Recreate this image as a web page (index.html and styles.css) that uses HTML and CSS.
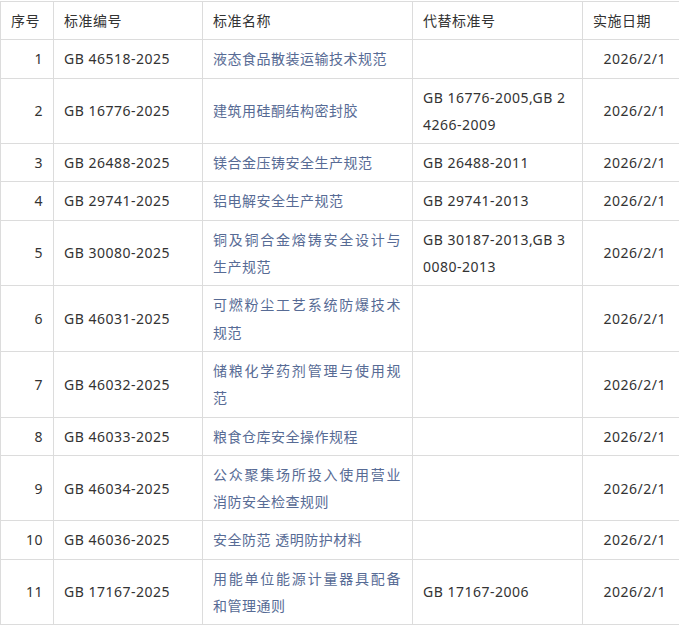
FILE: index.html
```html
<!DOCTYPE html>
<html lang="zh">
<head>
<meta charset="utf-8">
<link rel="stylesheet" href="styles.css">
</head>
<body>
<table class="std-table">
  <colgroup>
    <col class="c-no">
    <col class="c-code">
    <col class="c-name">
    <col class="c-rep">
    <col class="c-date">
  </colgroup>
  <thead>
    <tr><th>序号</th><th>标准编号</th><th>标准名称</th><th>代替标准号</th><th>实施日期</th></tr>
  </thead>
  <tbody>
    <tr><td class="num">1</td><td>GB 46518-2025</td><td class="name">液态食品散装运输技术规范</td><td class="rep"></td><td class="date">2026/2/1</td></tr>
    <tr><td class="num">2</td><td>GB 16776-2025</td><td class="name">建筑用硅酮结构密封胶</td><td class="rep">GB 16776-2005,GB 24266-2009</td><td class="date">2026/2/1</td></tr>
    <tr><td class="num">3</td><td>GB 26488-2025</td><td class="name">镁合金压铸安全生产规范</td><td class="rep">GB 26488-2011</td><td class="date">2026/2/1</td></tr>
    <tr><td class="num">4</td><td>GB 29741-2025</td><td class="name">铝电解安全生产规范</td><td class="rep">GB 29741-2013</td><td class="date">2026/2/1</td></tr>
    <tr><td class="num">5</td><td>GB 30080-2025</td><td class="name">铜及铜合金熔铸安全设计与生产规范</td><td class="rep">GB 30187-2013,GB 30080-2013</td><td class="date">2026/2/1</td></tr>
    <tr><td class="num">6</td><td>GB 46031-2025</td><td class="name">可燃粉尘工艺系统防爆技术规范</td><td class="rep"></td><td class="date">2026/2/1</td></tr>
    <tr><td class="num">7</td><td>GB 46032-2025</td><td class="name">储粮化学药剂管理与使用规范</td><td class="rep"></td><td class="date">2026/2/1</td></tr>
    <tr><td class="num">8</td><td>GB 46033-2025</td><td class="name">粮食仓库安全操作规程</td><td class="rep"></td><td class="date">2026/2/1</td></tr>
    <tr><td class="num">9</td><td>GB 46034-2025</td><td class="name">公众聚集场所投入使用营业消防安全检查规则</td><td class="rep"></td><td class="date">2026/2/1</td></tr>
    <tr><td class="num">10</td><td>GB 46036-2025</td><td class="name">安全防范 透明防护材料</td><td class="rep"></td><td class="date">2026/2/1</td></tr>
    <tr><td class="num">11</td><td>GB 17167-2025</td><td class="name">用能单位能源计量器具配备和管理通则</td><td class="rep">GB 17167-2006</td><td class="date">2026/2/1</td></tr>
  </tbody>
</table>
</body>
</html>
```

FILE: styles.css
```css
html, body {
  margin: 0;
  padding: 0;
  background: #fff;
}
body {
  padding-top: 1px;
  font-family: "Noto Sans", "Noto Sans CJK SC", sans-serif;
  font-size: 14px;
  letter-spacing: 0.5px;
  color: #333;
}
.std-table {
  border-collapse: collapse;
  table-layout: fixed;
  width: 679px;
}
.c-no { width: 53px; }
.c-code { width: 149px; }
.c-name { width: 210px; }
.c-rep { width: 170px; }
.c-date { width: 97px; }
.std-table th,
.std-table td {
  border: 1px solid #dcdcdc;
  padding: 5px 10px 5px 10px;
  line-height: 27.3px;
  vertical-align: middle;
  text-align: left;
  font-weight: normal;
  word-break: break-all;
}
.std-table td.num {
  text-align: right;
}
.std-table td.name {
  color: #576b95;
  text-align: justify;
  padding-right: 11px;
}
.std-table td.date {
  text-align: right;
  padding-right: 13px;
}
```
